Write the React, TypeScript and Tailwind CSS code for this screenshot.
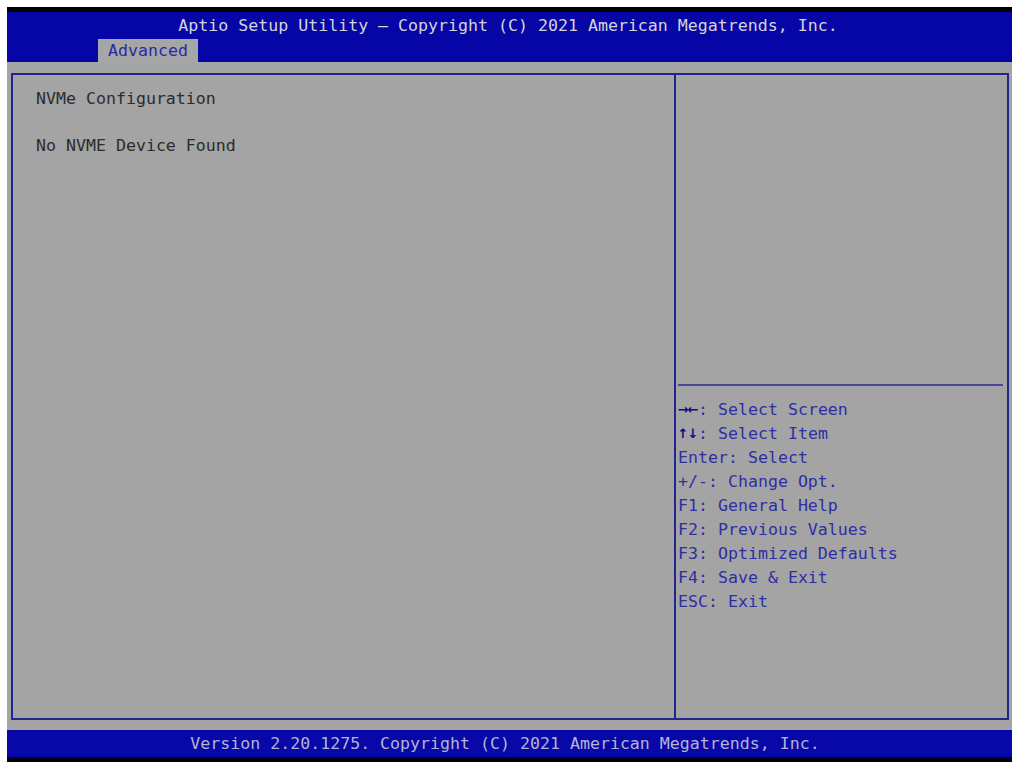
const helpLines = [
  { keys: ["→", "←"], text: ": Select Screen" },
  { keys: ["↑", "↓"], text: ": Select Item" },
  { keys: [], text: "Enter: Select" },
  { keys: [], text: "+/-: Change Opt." },
  { keys: [], text: "F1: General Help" },
  { keys: [], text: "F2: Previous Values" },
  { keys: [], text: "F3: Optimized Defaults" },
  { keys: [], text: "F4: Save & Exit" },
  { keys: [], text: "ESC: Exit" },
];

const mono = "font-['DejaVu_Sans_Mono','Liberation_Mono',monospace] text-[16.6px] leading-[24px]";

const App = () => {
  return (
    <div className={`w-[1015px] h-[762px] bg-white pt-[7px] pl-[7px] pr-[3px] overflow-hidden ${mono}`}>
      <div className="flex flex-col h-full">
        {/* top bar */}
        <div className="h-[5px] bg-black" />
        <div className="h-[50px] bg-[#0606a6] flex flex-col">
          <div className="h-[27px] flex items-center justify-center text-[#d4d4dc] pr-[3px]">
            Aptio Setup Utility – Copyright (C) 2021 American Megatrends, Inc.
          </div>
          <div className="flex pl-[91px]">
            <div className="h-[23px] w-[100px] bg-[#a6a6a6] text-[#2a2a9e] flex items-center justify-center">
              Advanced
            </div>
          </div>
        </div>

        {/* body */}
        <div className="h-[668px] bg-[#a4a4a4] pt-[11px] pl-[4px] pr-[3px] pb-[10px]">
          <div className="h-full border-2 border-[#24248e] flex">
            <div className="w-[663px] border-r-2 border-[#24248e] pl-[23px] pt-[12px] text-[#2c2c2c]">
              <div>NVMe Configuration</div>
              <div className="h-[23px]" />
              <div>No NVME Device Found</div>
            </div>
            <div className="flex-1 flex flex-col">
              <div className="h-[309px]" />
              <div className="h-[2px] bg-[#4a4a9c] ml-[2px] mr-[4px]" />
              <div className="pl-[2px] pt-[12px] text-[#2e2ea4]">
                {helpLines.map((l) => (
                  <div key={l.text} className="whitespace-pre flex">
                    {l.keys.map((k) => (
                      <span
                        key={k}
                        className="inline-flex w-[10px] justify-center font-['DejaVu_Sans',sans-serif] text-[13px] font-bold text-[#0a0a8a]"
                      >
                        {k}
                      </span>
                    ))}
                    <span>{l.text}</span>
                  </div>
                ))}
              </div>
            </div>
          </div>
        </div>

        {/* footer */}
        <div className="h-[27px] bg-[#0808a8] flex items-center justify-center text-[#b4b4d4] pr-[9px]">
          Version 2.20.1275. Copyright (C) 2021 American Megatrends, Inc.
        </div>
        <div className="flex-1 bg-gradient-to-b from-[#02023a] to-black" />
      </div>
    </div>
  );
};

export default App;
